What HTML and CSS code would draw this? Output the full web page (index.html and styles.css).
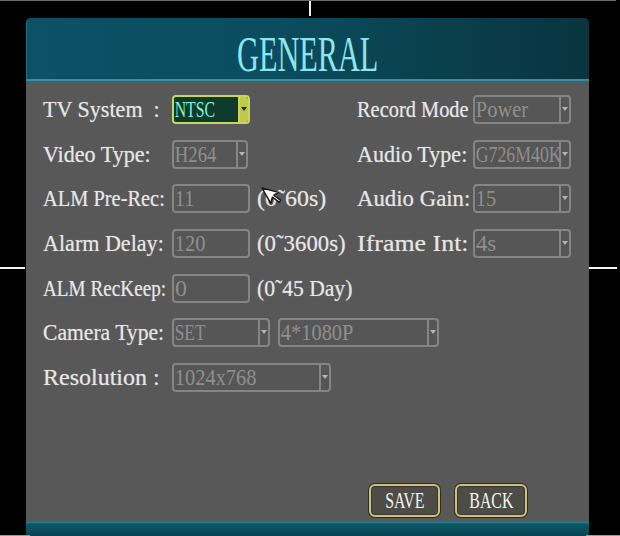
FILE: index.html
```html
<!DOCTYPE html>
<html>
<head>
<meta charset="utf-8">
<link rel="stylesheet" href="styles.css">
</head>
<body>
<div class="screen">
  <div class="panel">
    <div class="header"><span class="t title">GENERAL</span></div>
    <div class="body">
      <div class="form">
        <div class="lbl"><span class="t x92">TV System  :</span></div>
        <div class="sel active"><span class="t val x66">NTSC</span><span class="arr"></span></div>
        <div class="suf"></div>
        <div class="lbl"><span class="t x85">Record Mode</span></div>
        <div class="sel"><span class="t val x85">Power</span><span class="arr"></span></div>

        <div class="lbl"><span class="t x92">Video Type:</span></div>
        <div class="sel short"><span class="t val x78">H264</span><span class="arr"></span></div>
        <div class="suf"></div>
        <div class="lbl"><span class="t x92">Audio Type:</span></div>
        <div class="sel"><span class="t val x74">G726M40K</span><span class="arr"></span></div>

        <div class="lbl"><span class="t x85">ALM Pre-Rec:</span></div>
        <div class="inp"><span class="t val x85">11</span></div>
        <div class="suf"><span class="t x100">(0˜60s)</span></div>
        <div class="lbl"><span class="t x95">Audio Gain:</span></div>
        <div class="sel"><span class="t val x85">15</span><span class="arr"></span></div>

        <div class="lbl"><span class="t x92">Alarm Delay:</span></div>
        <div class="inp"><span class="t val x85">120</span></div>
        <div class="suf"><span class="t x95">(0˜3600s)</span></div>
        <div class="lbl"><span class="t x108">Iframe Int:</span></div>
        <div class="sel"><span class="t val x95">4s</span><span class="arr"></span></div>

        <div class="lbl"><span class="t x80">ALM RecKeep:</span></div>
        <div class="inp"><span class="t val x100">0</span></div>
        <div class="suf wide"><span class="t x90">(0˜45 Day)</span></div>

        <div class="lbl"><span class="t x90">Camera Type:</span></div>
        <div class="span">
          <div class="sel w98"><span class="t val x72">SET</span><span class="arr"></span></div>
          <div class="sel w161"><span class="t val x85">4*1080P</span><span class="arr"></span></div>
        </div>

        <div class="lbl"><span class="t x100">Resolution :</span></div>
        <div class="span">
          <div class="sel w159"><span class="t val x85">1024x768</span><span class="arr"></span></div>
        </div>
      </div>
      <div class="actions">
        <div class="btn b-save"><span class="t x66">SAVE</span></div>
        <div class="btn b-back"><span class="t x66">BACK</span></div>
      </div>
    </div>
    <div class="foot"></div>
  </div>

  <span class="mark m-top"></span>
  <span class="mark m-left"></span>
  <span class="mark m-right"></span>
  <span class="mark m-frame"></span>
  <span class="mark m-bl"></span>
  <span class="mark m-br"></span>

  <svg class="cursor" width="24" height="22" viewBox="0 0 24 22">
    <path d="M2 4 L10.8 19.3 L12.4 13.2 L19.1 18.2 L20.5 16.2 L13.8 11.2 L18.5 8.4 Z" fill="#fff" stroke="#1a1a1a" stroke-width="1.5" stroke-linejoin="round"/>
  </svg>
</div>
</body>
</html>
```

FILE: styles.css
```css
* { box-sizing: border-box; margin: 0; padding: 0; }
html, body { width: 620px; height: 536px; background: #000; overflow: hidden; }
body { font-family: "Liberation Serif", "DejaVu Serif", serif; }

.screen {
  position: relative;
  width: 620px;
  height: 536px;
  padding: 18px 0 0 26px;
}

.panel { width: 563px; display: flex; flex-direction: column; }

.header {
  height: 63px;
  background: linear-gradient(90deg, #0c5166 0%, #0b4c5f 45%, #0a3d48 80%, #093440 100%);
  border-radius: 5px 5px 0 0;
  border-bottom: 2px solid #2a95a6;
  border-left: 1px solid #1c7486;
  display: flex;
  justify-content: center;
  align-items: flex-start;
  padding-top: 11px;
}

.t {
  display: inline-block;
  white-space: pre;
  transform: scaleX(var(--sx, 0.9));
  transform-origin: 0 50%;
}
.x60 { --sx: 0.6; }
.x66 { --sx: 0.66; }
.x72 { --sx: 0.72; }
.x74 { --sx: 0.74; }
.x78 { --sx: 0.78; }
.x80 { --sx: 0.8; }
.x85 { --sx: 0.85; }
.x90 { --sx: 0.9; }
.x92 { --sx: 0.92; }
.x95 { --sx: 0.95; }
.x100 { --sx: 1; }
.x108 { --sx: 1.08; }

.title {
  font-size: 50px;
  line-height: 50px;
  color: #8ce6ec;
  --sx: 0.605;
  transform-origin: 50% 50%;
}

.body {
  height: 441px;
  background: #585858;
  display: flex;
  flex-direction: column;
  padding: 14px 0 0 17px;
}

.form {
  display: grid;
  grid-template-columns: 129px 78px 107px 116px 98px;
  grid-auto-rows: 29px;
  row-gap: 15.67px;
}

.lbl, .suf {
  font-size: 24px;
  line-height: 29px;
  color: #e6e6e6;
  text-shadow: 0 0 1px rgba(255, 255, 255, 0.45);
  white-space: nowrap;
}
.suf { padding-left: 7px; }
.suf.wide { grid-column: 3 / 6; }

.span {
  grid-column: 2 / 6;
  display: flex;
  gap: 8px;
}

.sel, .inp {
  display: flex;
  height: 29px;
  border: 2px solid #858585;
  border-radius: 4px;
  background: #565656;
  overflow: hidden;
}
.sel.short { width: 76px; }
.w98 { width: 98px; }
.w161 { width: 161px; }
.w159 { width: 159px; }

.val {
  flex: 1 1 auto;
  min-width: 0;
  font-size: 24px;
  line-height: 25px;
  color: #8f8f8f;
  padding-left: 1px;
}

.arr {
  flex: 0 0 10px;
  border-left: 2px solid #858585;
  position: relative;
}
.arr::after {
  content: "";
  position: absolute;
  left: 1px;
  top: 10px;
  border-left: 3px solid transparent;
  border-right: 3px solid transparent;
  border-top: 4px solid #b4b4b4;
}

.sel.active {
  border-color: #c9d65a;
  background: #0d3b2d;
}
.sel.active .val { color: #86f0cc; }
.sel.active .arr {
  border-left-color: #c9d65a;
  background: #c2c84a;
}
.sel.active .arr::after { border-top-color: #1b2a14; }

.actions {
  margin-top: auto;
  display: flex;
  justify-content: flex-end;
  gap: 15px;
  padding: 0 62px 5px 0;
}

.btn {
  height: 33px;
  border: 2px solid #cbc27c;
  border-radius: 6px;
  box-shadow: 0 0 0 1px #2e2d28, inset 0 0 0 1px #3a3932;
  background: #4d4c46;
  display: flex;
  justify-content: center;
  align-items: flex-start;
  font-size: 24px;
  line-height: 29px;
  color: #f4f4f4;
}
.btn .t { transform-origin: 50% 50%; }
.b-save { width: 71px; }
.b-back { width: 72px; }

.foot {
  height: 14px;
  background: linear-gradient(180deg, #1f8c9c 0px, #0d5666 2px, #0a4352 100%);
}

.mark { position: absolute; background: #f2f2f2; }
.m-top { left: 309px; top: 0; width: 2px; height: 16px; }
.m-left { left: 0; top: 267px; width: 25px; height: 2px; }
.m-right { left: 589px; top: 267px; width: 28px; height: 2px; }
.m-frame { left: 0; top: 0; width: 616px; height: 1px; background: #6a6a6a; }
.m-bl { left: 0; top: 535px; width: 30px; height: 1px; background: #9a9a9a; }
.m-br { left: 586px; top: 535px; width: 34px; height: 1px; background: #9a9a9a; }

.cursor { position: absolute; left: 260px; top: 184px; }
```
